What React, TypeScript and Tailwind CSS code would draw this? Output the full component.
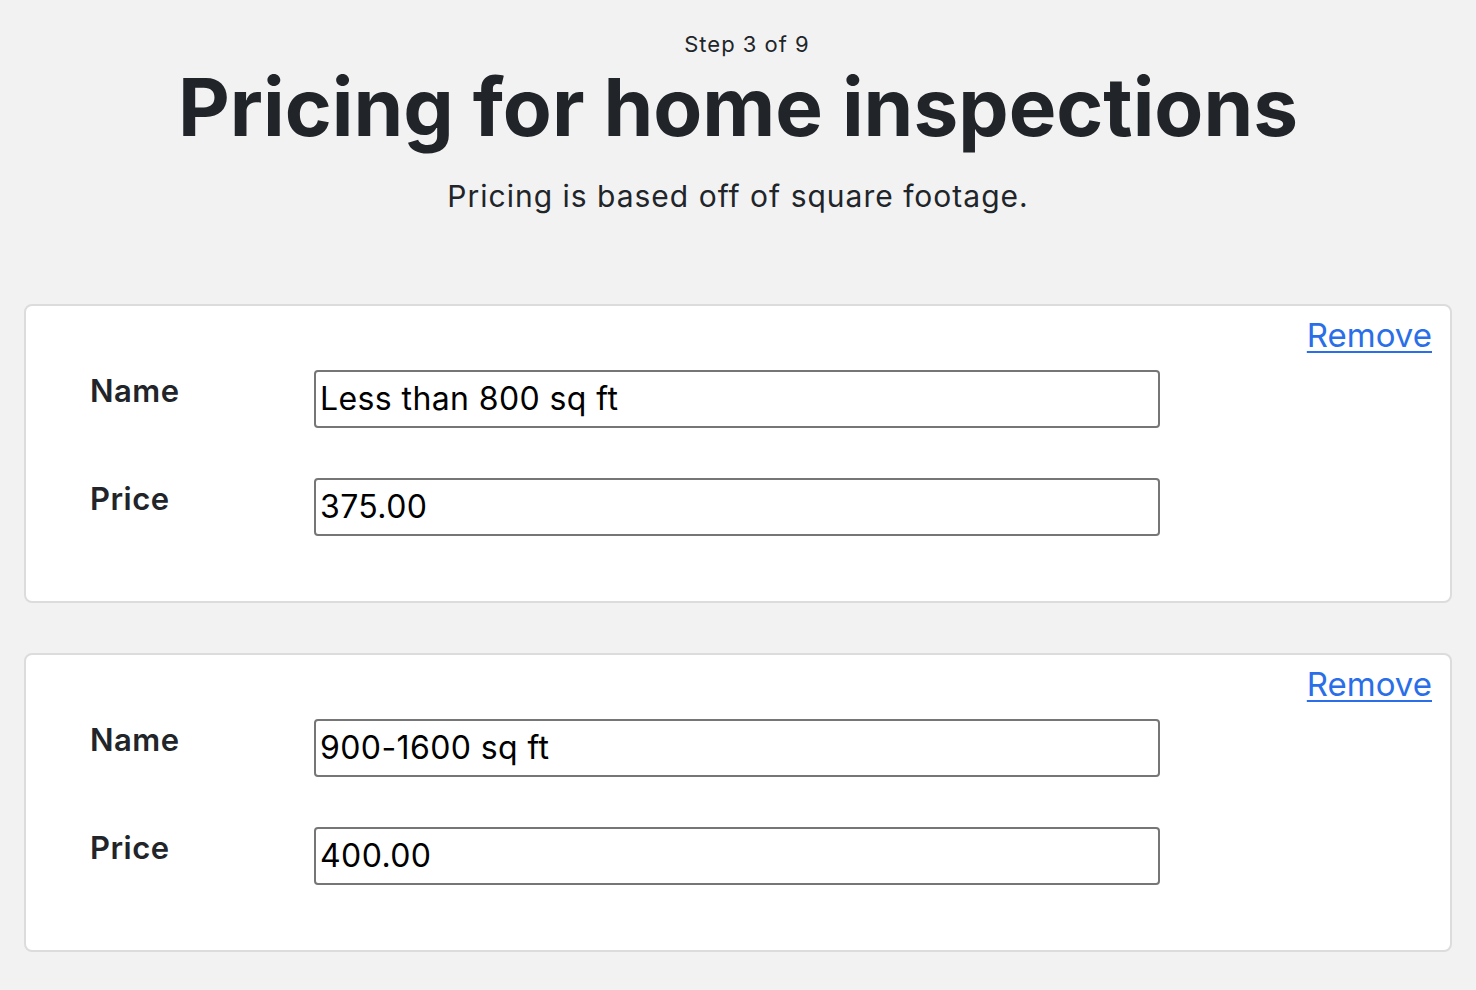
const TIERS = [
  { name: 'Less than 800 sq ft', price: '375.00' },
  { name: '900-1600 sq ft', price: '400.00' },
]

function Field({ label, value }: { label: string; value: string }) {
  return (
    <div className="flex items-start">
      <label className="w-[224px] shrink-0 pt-[1px] text-[31px] leading-[40px] font-semibold tracking-[0.5px] text-[#212529]">{label}</label>
      <input
        readOnly
        value={value}
        className="w-[846px] h-[58px] px-[4px] pb-[2px] rounded-[4px] border-2 border-[#767676] bg-white text-[32px] tracking-[0.4px] text-black outline-none"
      />
    </div>
  )
}

export default function App() {
  return (
    <div className="min-h-screen bg-[#f2f2f2] px-[24px] pt-[28px] pb-[40px] font-['Inter',sans-serif] text-[#212529]">
      <div className="text-center">
        <p className="pl-[18px] text-[22px] leading-[32px] tracking-[1px]">Step 3 of 9</p>
        <h1 className="mt-[2px] text-[80px] leading-[90px] font-bold">Pricing for home inspections</h1>
        <p className="mt-[24px] text-[30px] leading-[40px] tracking-[1px]">Pricing is based off of square footage.</p>
      </div>

      <div className="mt-[88px] flex flex-col gap-[50px]">
        {TIERS.map(t => (
          <div key={t.name} className="bg-white rounded-[8px] border-2 border-[#dcdcdc] pl-[64px] pr-[18px] pt-[9px] pb-[65px]">
            <div className="flex justify-end">
              <a href="#" className="text-[33px] leading-[40px] text-[#2a6fe8] underline decoration-2 underline-offset-[4px]">Remove</a>
            </div>
            <div className="mt-[15px] flex flex-col gap-[50px]">
              <Field label="Name" value={t.name} />
              <Field label="Price" value={t.price} />
            </div>
          </div>
        ))}
      </div>
    </div>
  )
}
